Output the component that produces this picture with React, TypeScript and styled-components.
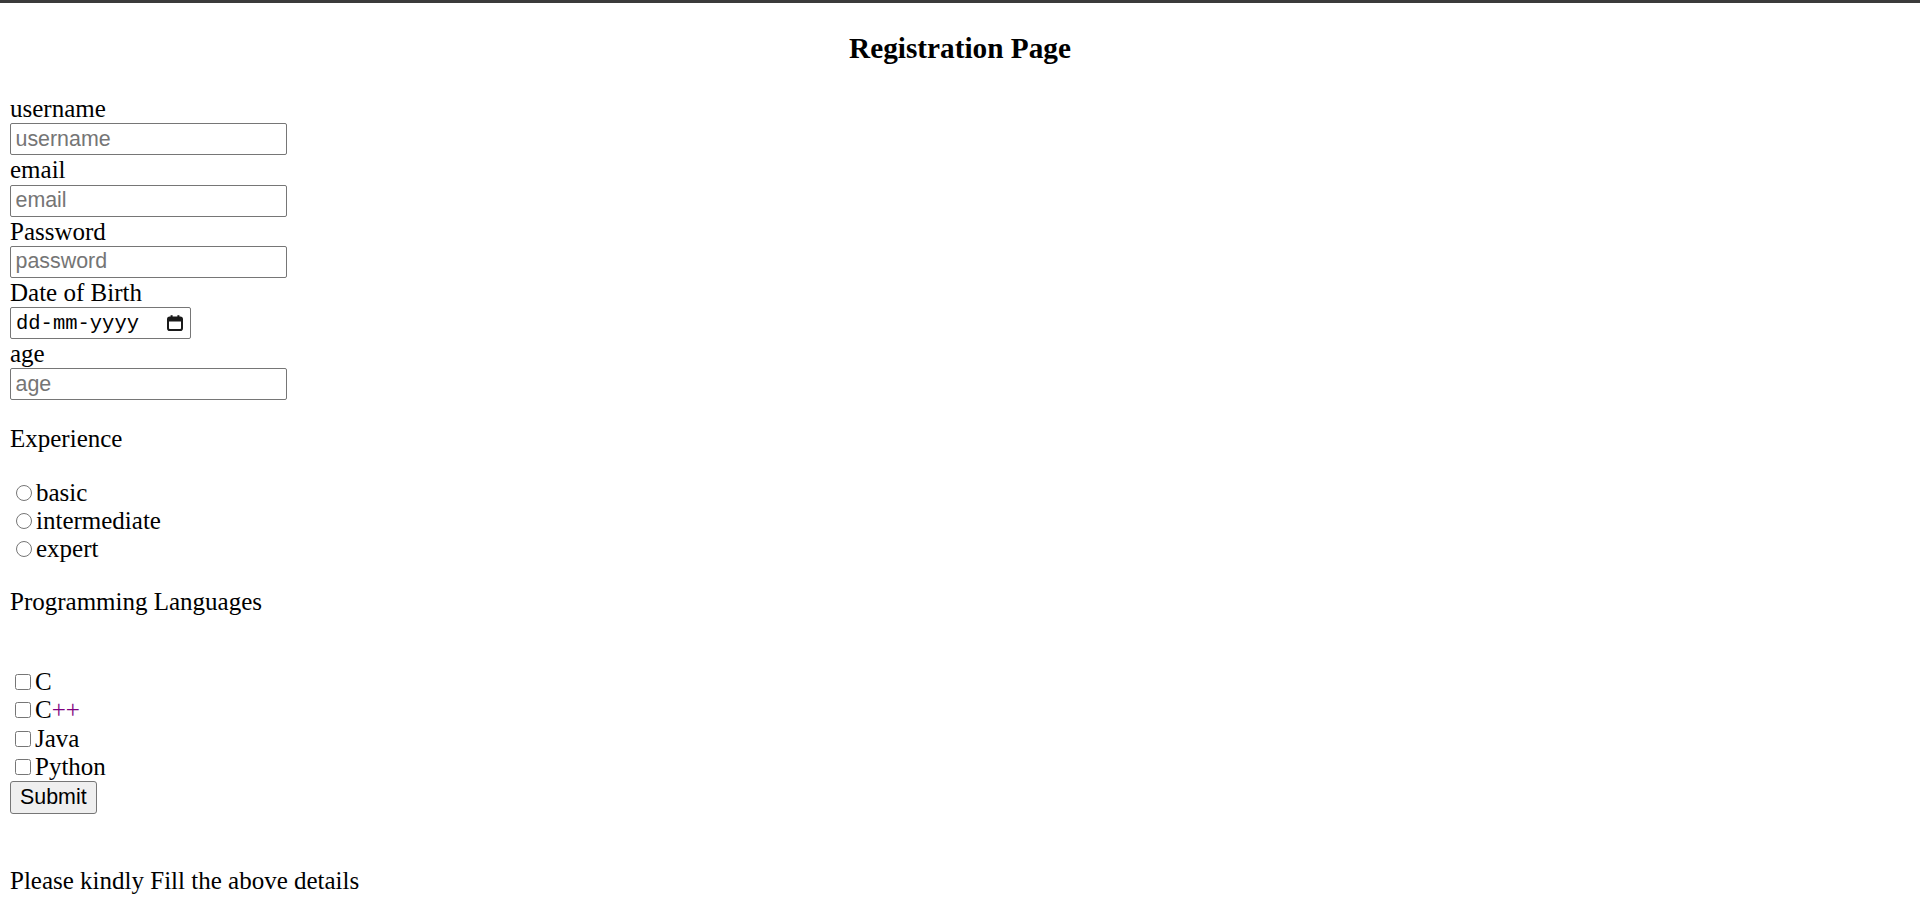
import styled, { createGlobalStyle } from 'styled-components'

const experience = ['basic', 'intermediate', 'expert']
const languages = ['C', 'C++', 'Java', 'Python']

const fields = [
  { label: 'username', placeholder: 'username', type: 'text' },
  { label: 'email', placeholder: 'email', type: 'email' },
  { label: 'Password', placeholder: 'password', type: 'password' },
]

function CalendarIcon() {
  return (
    <svg width="18" height="18" viewBox="0 0 18 18" fill="none">
      <rect x="2" y="3.5" width="14" height="12.5" rx="1.8" stroke="#1a1a1a" strokeWidth="2" />
      <rect x="2" y="3.5" width="14" height="4" fill="#1a1a1a" />
      <rect x="4.6" y="1.2" width="2" height="3" fill="#1a1a1a" />
      <rect x="11.4" y="1.2" width="2" height="3" fill="#1a1a1a" />
    </svg>
  )
}

function langLabel(lang: string) {
  // the ++ shows up in link purple in the original
  if (lang === 'C++') return <>C<Plus>++</Plus></>
  return lang
}

function App() {
  return (
    <>
      <GlobalStyle />
      <TopBar />
      <Page>
        <Heading>Registration Page</Heading>
        <form onSubmit={e => e.preventDefault()}>
          {fields.map(f => (
            <div key={f.label}>
              <Label>{f.label}</Label>
              <TextInput type={f.type} placeholder={f.placeholder} />
            </div>
          ))}
          <Label>Date of Birth</Label>
          <DateBox>
            <DateText>dd-mm-yyyy</DateText>
            <CalendarIcon />
          </DateBox>
          <Label>age</Label>
          <TextInput type="text" placeholder="age" />

          <Section>Experience</Section>
          <OptionList>
            {experience.map(level => (
              <Option key={level}>
                <Radio type="radio" name="experience" value={level} />
                {level}
              </Option>
            ))}
          </OptionList>

          <Section>Programming Languages</Section>
          <OptionList $gap={51}>
            {languages.map(lang => (
              <Option key={lang}>
                <Check type="checkbox" value={lang} />
                {langLabel(lang)}
              </Option>
            ))}
          </OptionList>
          <SubmitButton type="submit">Submit</SubmitButton>
        </form>
        <Footer>Please kindly Fill the above details</Footer>
      </Page>
    </>
  )
}

const GlobalStyle = createGlobalStyle`
html, body {
  margin: 0;
  padding: 0;
  background: #fff;
}
body {
  font-family: "Liberation Serif", "Times New Roman", serif;
  font-size: 25px;
  color: #000;
}
`
const TopBar = styled.div`
height: 3px;
background: #3b3b3b;
`
const Page = styled.div`
padding: 0 10px;
`
const Heading = styled.h3`
margin: 28px 0 29px;
font-size: 29.25px;
line-height: 34px;
font-weight: bold;
text-align: center;
`
const Label = styled.div`
line-height: 29.25px;
`
const TextInput = styled.input`
display: block;
box-sizing: border-box;
width: 277px;
height: 32px;
margin: 0;
padding: 0 4px 0 4.5px;
border: 1px solid #767676;
border-radius: 2px;
font-family: "Liberation Sans", Arial, sans-serif;
font-size: 21.4px;
color: #000;
&::placeholder {
  color: #757575;
}
`
const DateBox = styled.div`
box-sizing: border-box;
width: 181px;
height: 32px;
display: flex;
align-items: center;
justify-content: space-between;
padding: 0 6px 0 5px;
border: 1px solid #767676;
border-radius: 2px;
`
const DateText = styled.span`
font-family: "Liberation Mono", "DejaVu Sans Mono", monospace;
font-size: 20.5px;
color: #000;
`
const Section = styled.p`
margin: 25px 0 24.5px;
line-height: 28.75px;
`
// the top margin collapses with the heading's bottom margin
const OptionList = styled.div<{ $gap?: number }>`
display: flex;
flex-direction: column;
margin-top: ${props => props.$gap ?? 0}px;
`
const Option = styled.label`
display: flex;
align-items: center;
height: 28.25px;
`
const Radio = styled.input`
width: 16px;
height: 16px;
margin: 0 4px 0 6px;
`
const Check = styled.input`
width: 16px;
height: 16px;
margin: 0 4px 0 5px;
`
const Plus = styled.span`
color: #800080;
`
const SubmitButton = styled.button`
display: block;
box-sizing: border-box;
height: 33px;
margin: 0;
padding: 0 9px;
background: #efefef;
border: 1px solid #767676;
border-radius: 3px;
font-family: "Liberation Sans", Arial, sans-serif;
font-size: 21.4px;
color: #000;
`
const Footer = styled.p`
margin: 53px 0 0;
line-height: 28.75px;
`

export default App
